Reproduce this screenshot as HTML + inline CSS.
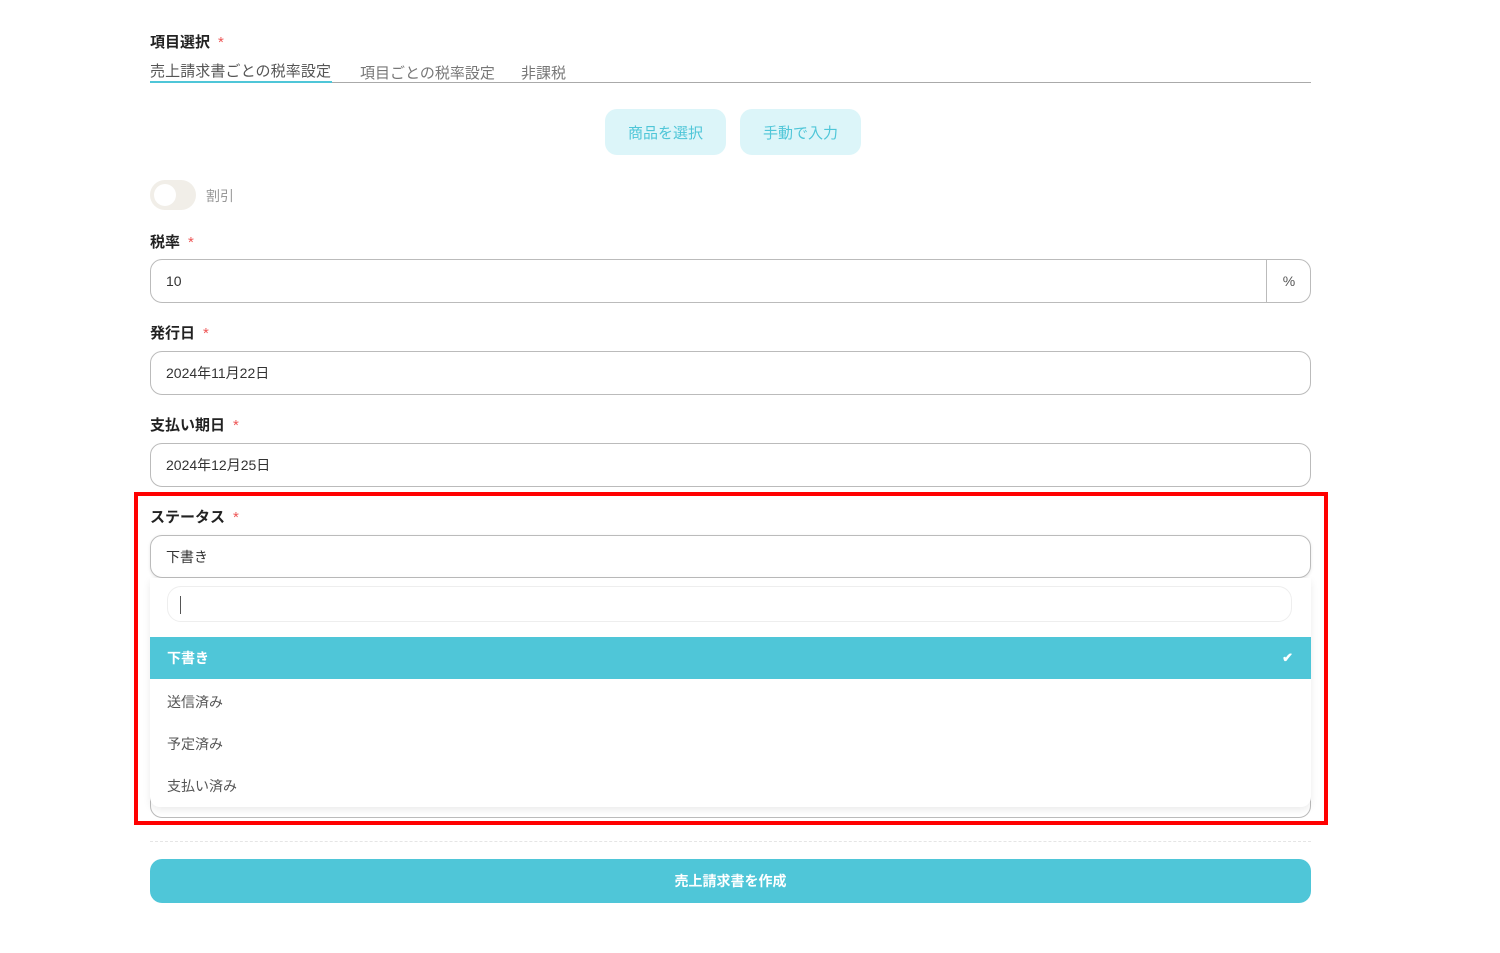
<!DOCTYPE html>
<html><head><meta charset="utf-8"><style>
*{box-sizing:border-box;margin:0;padding:0}
body{width:1500px;height:953px;background:#fff;font-family:"Liberation Sans","Noto Sans CJK JP",sans-serif;position:relative;overflow:hidden;color:#333}
.a{position:absolute}
.lbl{font-size:15px;font-weight:bold;color:#222}
.lbl b{color:#e55;margin-left:8px;font-weight:normal}
.inp{position:absolute;left:150px;width:1161px;border:1px solid #bbb;border-radius:12px;font-size:14px;color:#333;padding-left:15px;display:flex;align-items:center}
</style></head><body>
<div class="a lbl" style="left:150px;top:31px">項目選択<b>*</b></div>
<div class="a" style="left:150px;top:82px;width:1161px;height:1px;background:#aaa"></div>
<div class="a" style="left:150px;top:60px;font-size:15px;color:#555;letter-spacing:0.1px">売上請求書ごとの税率設定</div>
<div class="a" style="left:150px;top:81px;width:182px;height:2px;background:#4fc6d8"></div>
<div class="a" style="left:360px;top:62px;font-size:15px;color:#777">項目ごとの税率設定</div>
<div class="a" style="left:521px;top:62px;font-size:15px;color:#777">非課税</div>
<div class="a" style="left:605px;top:109px;width:121px;height:46px;border-radius:12px;background:#dcf5f9;color:#4fc6d8;font-size:15px;display:flex;align-items:center;justify-content:center">商品を選択</div>
<div class="a" style="left:740px;top:109px;width:121px;height:46px;border-radius:12px;background:#dcf5f9;color:#4fc6d8;font-size:15px;display:flex;align-items:center;justify-content:center">手動で入力</div>
<div class="a" style="left:150px;top:180px;width:46px;height:30px;border-radius:15px;background:#f1eee8"><div style="position:absolute;left:4px;top:4px;width:22px;height:22px;border-radius:50%;background:#fff"></div></div>
<div class="a" style="left:206px;top:186px;font-size:14px;color:#999">割引</div>
<div class="a lbl" style="left:150px;top:231px">税率<b>*</b></div>
<div class="inp" style="top:259px;height:44px">10</div>
<div class="a" style="left:1266px;top:259px;width:45px;height:44px;border-left:1px solid #bbb;display:flex;align-items:center;justify-content:center;font-size:14px;color:#555">%</div>
<div class="a lbl" style="left:150px;top:322px">発行日<b>*</b></div>
<div class="inp" style="top:351px;height:44px">2024年11月22日</div>
<div class="a lbl" style="left:150px;top:414px">支払い期日<b>*</b></div>
<div class="inp" style="top:443px;height:44px">2024年12月25日</div>
<div class="a lbl" style="left:150px;top:506px">ステータス<b>*</b></div>
<div class="inp" style="top:535px;height:43px;box-shadow:0 1px 3px rgba(0,0,0,.1)">下書き</div>
<div class="inp" style="top:770px;height:48px"></div>
<div class="a" style="left:150px;top:578px;width:1161px;height:229px;background:#fff;border-radius:0 0 10px 10px;box-shadow:0 3px 8px rgba(0,0,0,.08)"></div>
<div class="a" style="left:167px;top:586px;width:1125px;height:36px;border:1px solid #eee;border-radius:14px"><div style="position:absolute;left:12px;top:9px;width:1px;height:18px;background:#555"></div></div>
<div class="a" style="left:150px;top:637px;width:1161px;height:42px;background:#4fc6d8;color:#fff;font-size:14px;font-weight:bold;padding-left:17px;display:flex;align-items:center">下書き<span style="position:absolute;right:18px;font-size:13px">✔</span></div>
<div class="a" style="left:167px;top:692px;font-size:14px;color:#555">送信済み</div>
<div class="a" style="left:167px;top:734px;font-size:14px;color:#555">予定済み</div>
<div class="a" style="left:167px;top:776px;font-size:14px;color:#555">支払い済み</div>
<div class="a" style="left:134px;top:492px;width:1194px;height:333px;border:4px solid #f00"></div>
<div class="a" style="left:150px;top:841px;width:1161px;border-top:1px dashed #e5e5e5"></div>
<div class="a" style="left:150px;top:859px;width:1161px;height:44px;border-radius:12px;background:#4fc6d8;color:#fff;font-size:14px;font-weight:bold;display:flex;align-items:center;justify-content:center">売上請求書を作成</div>
</body></html>
